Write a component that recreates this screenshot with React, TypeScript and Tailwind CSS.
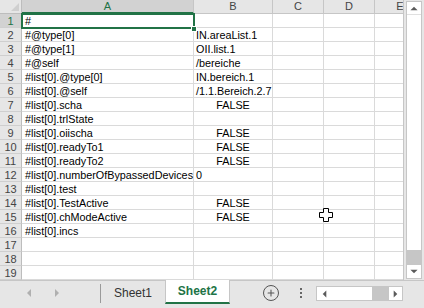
import { Plus } from "lucide-react";

type Row = { a?: string; b?: string; bool?: boolean };

const rows: Row[] = [
  { a: "#" },
  { a: "#@type[0]", b: "IN.areaList.1" },
  { a: "#@type[1]", b: "OII.list.1" },
  { a: "#@self", b: "/bereiche" },
  { a: "#list[0].@type[0]", b: "IN.bereich.1" },
  { a: "#list[0].@self", b: "/1.1.Bereich.2.7" },
  { a: "#list[0].scha", b: "FALSE", bool: true },
  { a: "#list[0].trlState" },
  { a: "#list[0].oiischa", b: "FALSE", bool: true },
  { a: "#list[0].readyTo1", b: "FALSE", bool: true },
  { a: "#list[0].readyTo2", b: "FALSE", bool: true },
  { a: "#list[0].numberOfBypassedDevices", b: "0" },
  { a: "#list[0].test" },
  { a: "#list[0].TestActive", b: "FALSE", bool: true },
  { a: "#list[0].chModeActive", b: "FALSE", bool: true },
  { a: "#list[0].incs" },
  {},
  {},
  {},
];

function Tri({ dir, className }: { dir: "up" | "down" | "left" | "right"; className?: string }) {
  const pts = {
    up: "0,6 5,1 10,6",
    down: "0,1 5,6 10,1",
    left: "6,0 1,5 6,10",
    right: "1,0 6,5 1,10",
  }[dir];
  const vb = dir === "up" || dir === "down" ? "0 0 10 7" : "0 0 7 10";
  return (
    <svg viewBox={vb} className={className}>
      <polygon points={pts} fill="currentColor" />
    </svg>
  );
}

export default function App() {
  return (
    <div className="relative flex h-[308px] w-[424px] flex-col overflow-hidden bg-white font-['Liberation_Sans',Arial,sans-serif] text-[10.8px] text-black">
      <div className="flex h-[280px]">
        {/* sheet grid */}
        <div className="relative w-[403px] overflow-hidden">
          <div className="flex h-[14px] w-[460px] text-[11px] text-[#444]">
            <div className="relative w-[22px] shrink-0 border-r border-b border-[#bdbdbd] bg-[#e6e6e6]">
              <svg viewBox="0 0 8 8" className="absolute right-[2px] bottom-[2px] h-[8px] w-[8px]">
                <polygon points="8,0 8,8 0,8" fill="#cfcfcf" />
              </svg>
            </div>
            <div className="flex w-[172px] shrink-0 items-center justify-center border-r border-b-2 border-r-[#c6c6c6] border-b-[#217346] bg-[#d2d2d2] text-[#217346]">
              A
            </div>
            <div className="flex w-[79px] shrink-0 items-center justify-center border-r border-b border-[#c6c6c6] bg-[#e6e6e6]">B</div>
            <div className="flex w-[51px] shrink-0 items-center justify-center border-r border-b border-[#c6c6c6] bg-[#e6e6e6]">C</div>
            <div className="flex w-[51px] shrink-0 items-center justify-center border-r border-b border-[#c6c6c6] bg-[#e6e6e6]">D</div>
            <div className="flex w-[51px] shrink-0 items-center justify-center border-r border-b border-[#c6c6c6] bg-[#e6e6e6]">E</div>
          </div>

          {rows.map((r, i) => (
            <div key={i} className="flex h-[14px] w-[460px] leading-[14px]">
              <div
                className={`flex w-[22px] shrink-0 items-center justify-center border-r border-b border-r-[#bdbdbd] border-b-[#cfcfcf] text-[11px] ${
                  i === 0 ? "bg-[#d2d2d2] text-[#217346]" : "bg-[#e6e6e6] text-[#444]"
                }`}
              >
                {i + 1}
              </div>
              <div className="w-[172px] shrink-0 whitespace-nowrap border-r border-b border-[#dadada] pl-[3px]">{r.a}</div>
              <div
                className={`w-[79px] shrink-0 whitespace-nowrap border-r border-b border-[#dadada] ${
                  r.bool ? "text-center" : "pl-[2px]"
                }`}
              >
                {r.b}
              </div>
              <div className="w-[51px] shrink-0 border-r border-b border-[#dadada]" />
              <div className="w-[51px] shrink-0 border-r border-b border-[#dadada]" />
              <div className="w-[51px] shrink-0 border-r border-b border-[#dadada]" />
            </div>
          ))}

          {/* active cell A1 */}
          <div className="pointer-events-none absolute top-[13px] left-[21px] h-[16px] w-[174px] border-2 border-[#217346]" />
          <div className="absolute top-[26px] left-[191px] h-[6px] w-[6px] border border-white bg-[#217346]" />
        </div>

        {/* vertical scrollbar */}
        <div className="flex w-[21px] flex-col border-l border-[#c6c6c6] bg-[#e6e6e6] px-[2px] py-[1px]">
          <div className="flex flex-1 flex-col border border-[#c6c6c6] bg-white">
            <div className="flex h-[13px] items-center justify-center border-b border-[#e0e0e0] text-[#5a5a5a]">
              <Tri dir="up" className="h-[5px] w-[8px]" />
            </div>
            <div className="flex-1 bg-white" />
            <div className="h-[15px] bg-[#c6c6c6]" />
            <div className="flex h-[13px] items-center justify-center text-[#5a5a5a]">
              <Tri dir="down" className="h-[5px] w-[8px]" />
            </div>
          </div>
        </div>
      </div>

      {/* sheet tabs bar */}
      <div className="flex h-[28px] items-start border-t border-[#c6c6c6] bg-[#e6e6e6]">
        <div className="flex h-[24px] w-[100px] items-center gap-[22px] pl-[26px] text-[#b0b0b0]">
          <Tri dir="left" className="h-[8px] w-[6px]" />
          <Tri dir="right" className="h-[8px] w-[6px]" />
        </div>
        <div className="mt-[3px] h-[19px] w-px bg-[#9a9a9a]" />
        <div className="flex h-[24px] w-[64px] items-center justify-center text-[12px] text-[#333]">Sheet1</div>
        <div className="-mt-px flex h-[24px] w-[65px] items-center justify-center border-x border-[#c6c6c6] border-b-2 border-b-[#217346] bg-white text-[12px] font-bold text-[#217346]">
          Sheet2
        </div>
        <div className="flex h-[24px] w-[49px] items-center justify-end">
          <div className="flex h-[16px] w-[16px] items-center justify-center rounded-full border-[1.5px] border-[#555]">
            <Plus size={10} strokeWidth={2.5} color="#555" />
          </div>
        </div>
        <div className="flex h-[24px] w-[37px] flex-col items-start justify-center gap-[2px] pl-[21px]">
          <div className="h-[2px] w-[2px] bg-[#666]" />
          <div className="h-[2px] w-[2px] bg-[#666]" />
          <div className="h-[2px] w-[2px] bg-[#666]" />
        </div>
        <div className="mt-[5px] flex h-[15px] w-[87px] border border-[#c6c6c6] bg-white">
          <div className="flex w-[14px] items-center justify-center text-[#5a5a5a]">
            <Tri dir="left" className="h-[8px] w-[5px]" />
          </div>
          <div className="flex-1" />
          <div className="w-[17px] bg-[#c6c6c6]" />
          <div className="flex w-[13px] items-center justify-center text-[#5a5a5a]">
            <Tri dir="right" className="h-[8px] w-[5px]" />
          </div>
        </div>
      </div>

      {/* mouse cursor */}
      <svg viewBox="0 0 14 14" className="absolute top-[208px] left-[319px] h-[14px] w-[14px]">
        <polygon
          points="4.5,0.5 9.5,0.5 9.5,4.5 13.5,4.5 13.5,9.5 9.5,9.5 9.5,13.5 4.5,13.5 4.5,9.5 0.5,9.5 0.5,4.5 4.5,4.5"
          fill="white"
          stroke="black"
          strokeWidth="1"
        />
      </svg>
    </div>
  );
}
